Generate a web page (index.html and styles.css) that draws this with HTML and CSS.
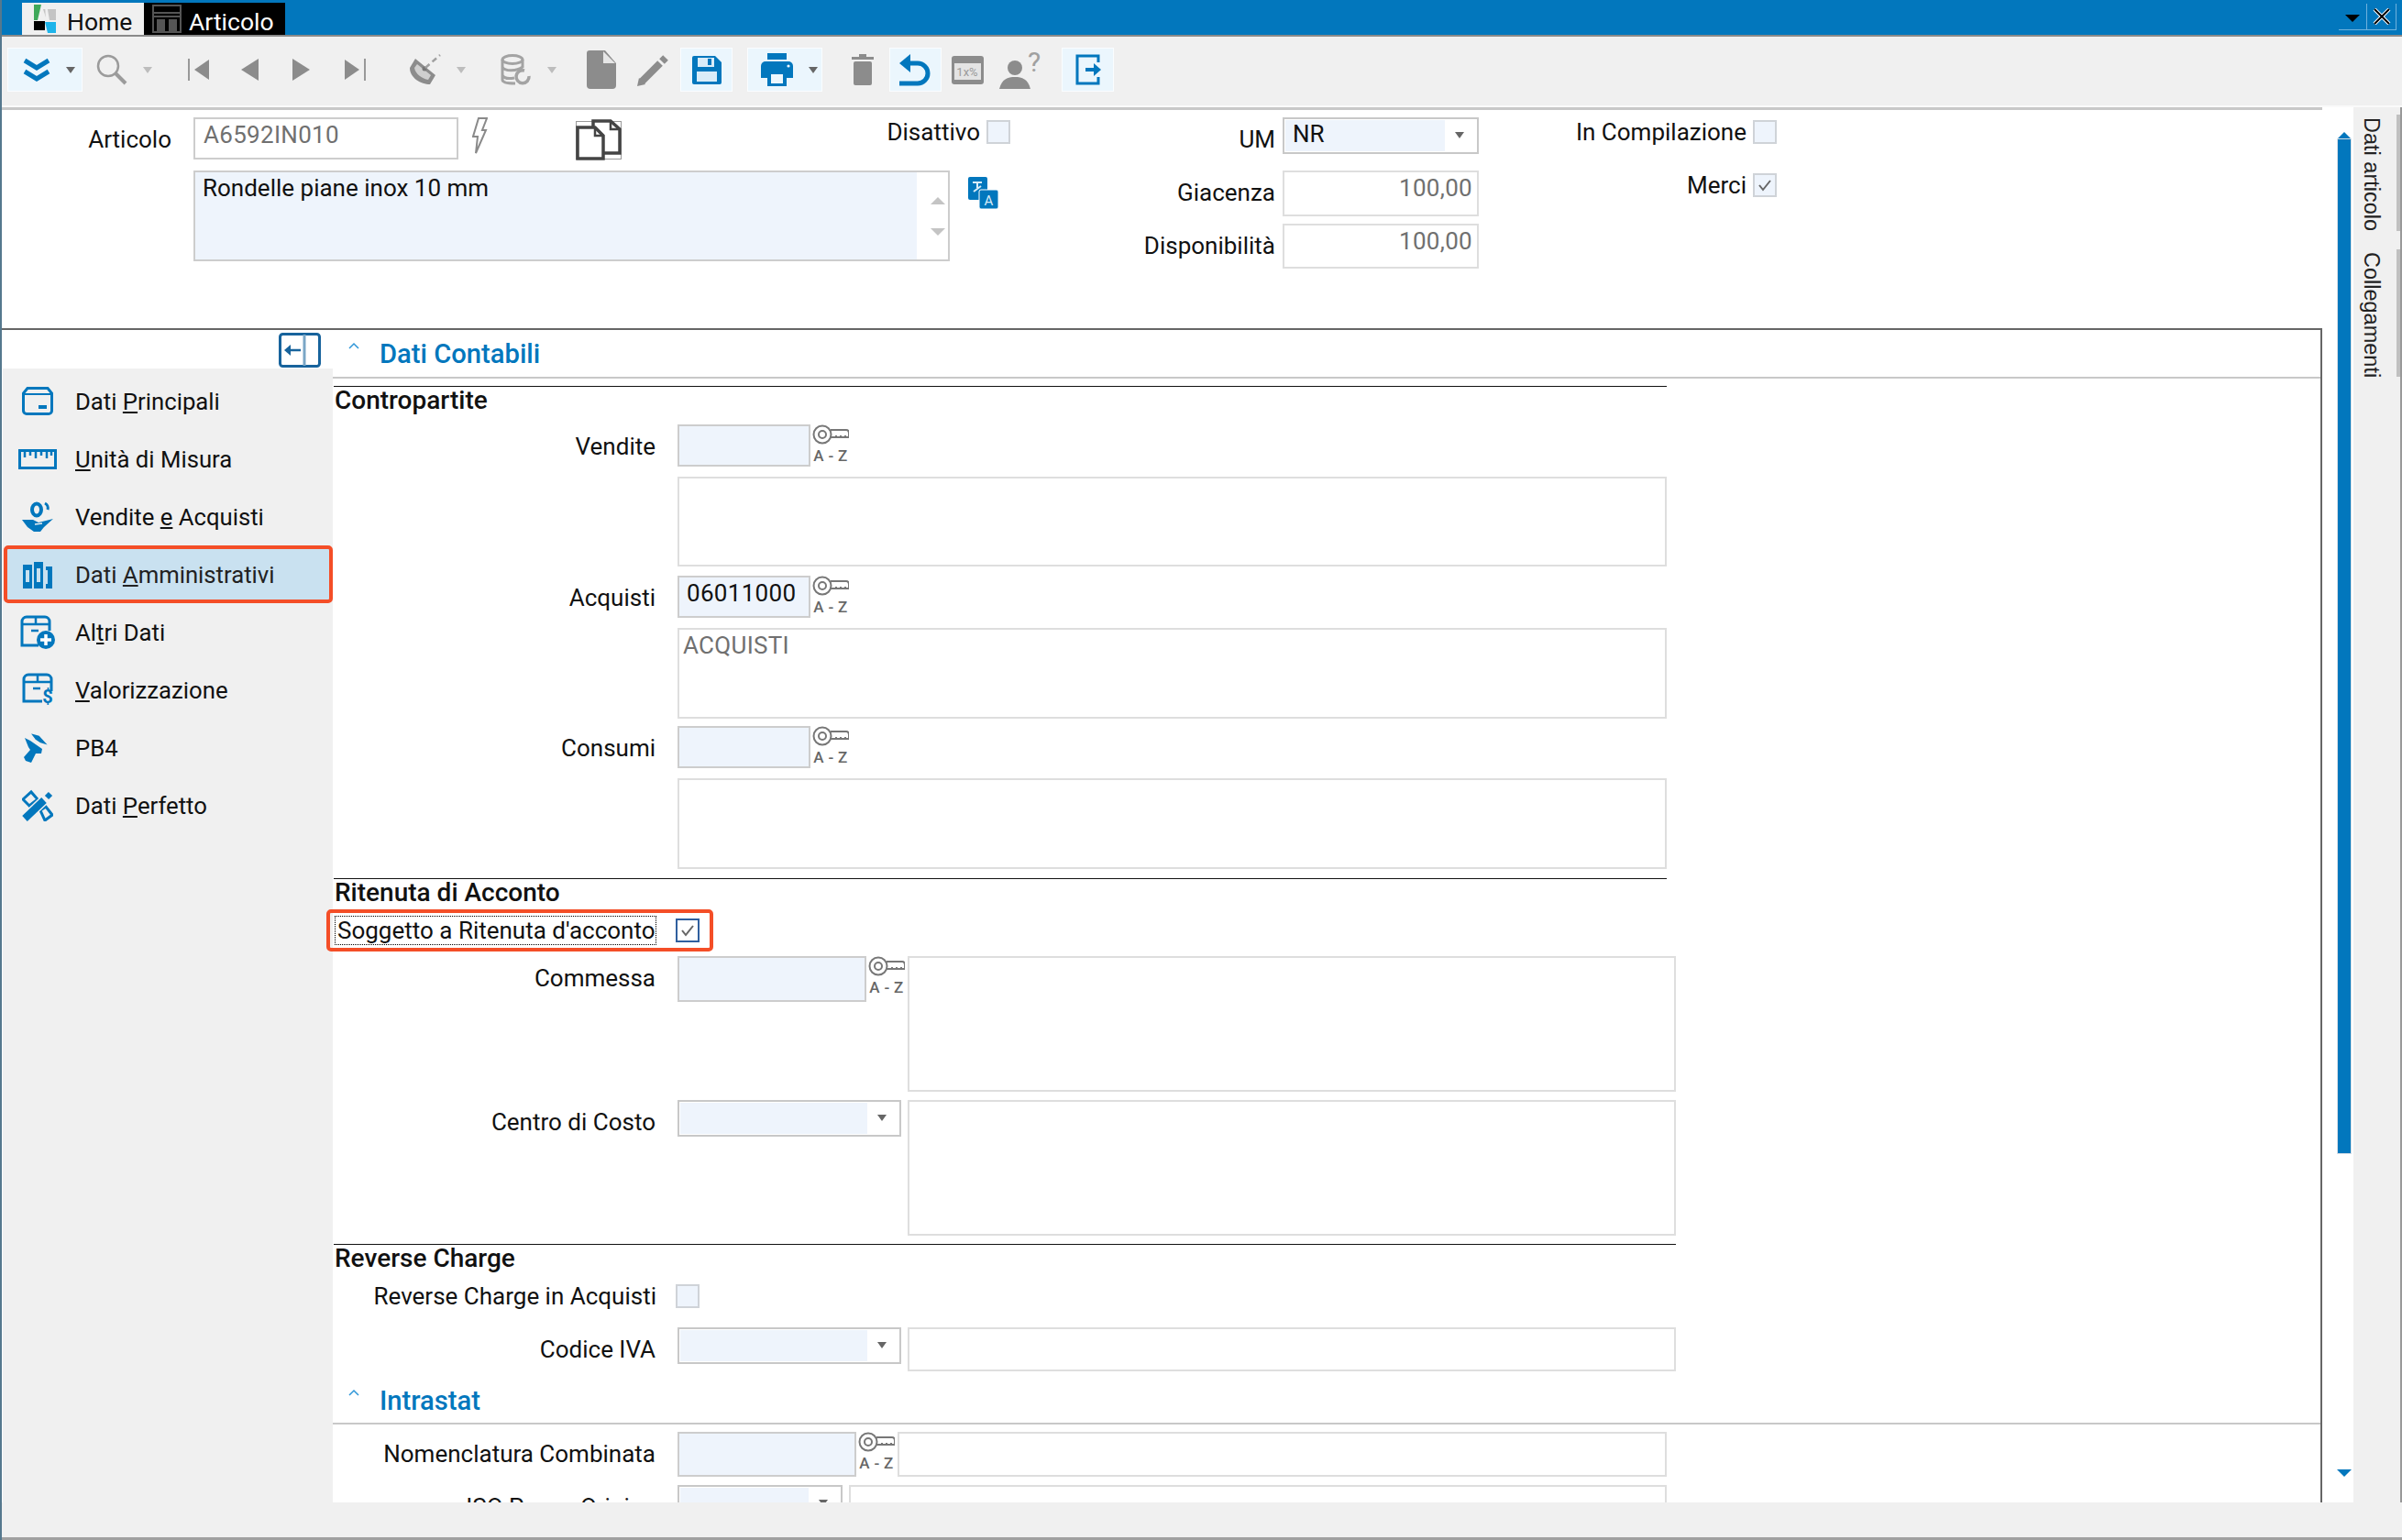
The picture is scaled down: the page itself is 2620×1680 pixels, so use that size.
FILE: index.html
```html
<!DOCTYPE html>
<html lang="it">
<head>
<meta charset="UTF-8">
<title>Articolo</title>
<link rel="stylesheet" href="styles.css">
</head>
<body>
<div class="app">
  <header class="titlebar">
    <div class="tab tab-home">
      <svg class="tab-logo" viewBox="0 0 24 31"><polygon points="0,0 8,0 4,17 0,17" fill="#3fa85a"/><polygon points="10,5 24,5 24,17 14,17" fill="#c4c4c4"/><rect x="0" y="18" width="12" height="10" fill="#000"/><polygon points="12,19 24,19 24,31 15,31" fill="#1eb4ea"/><polygon points="12,0 14,0 17,17 13,17" fill="#f0f0f0"/></svg>
      <span>Home</span>
    </div>
    <div class="tab tab-article">
      <svg class="tab-icon" viewBox="0 0 32 31"><rect x="1" y="1" width="30" height="29" fill="none" stroke="#555" stroke-width="2"/><path d="M2 9H30M2 13H30" stroke="#555" stroke-width="2"/><rect x="5" y="16" width="9" height="13" fill="#555"/><rect x="18" y="16" width="9" height="13" fill="#555"/></svg>
      <span>Articolo</span>
    </div>
    <div class="win-btns">
      <div class="win-btn win-menu"><span class="win-caret"></span></div>
      <div class="win-btn win-close">
        <svg viewBox="0 0 20 18" width="20" height="18"><path d="M2 1L18 17M18 1L2 17" stroke="#fff" stroke-width="4"/><path d="M2 1L18 17M18 1L2 17" stroke="#000" stroke-width="2"/></svg>
      </div>
    </div>
  </header>

  <div class="toolbar">
    <div class="tb-btn tb-menu"><svg width="30" height="27" viewBox="0 0 30 27"><path d="M2 3L15 11L28 3M2 15L15 23L28 15" fill="none" stroke="#0277bd" stroke-width="5"/></svg><span class="caret caret-dark"></span></div>
    <div class="tb-item"><svg width="34" height="34" viewBox="0 0 34 34"><circle cx="13" cy="13" r="11" fill="none" stroke="#9b9b9b" stroke-width="2.5"/><path d="M21 21L32 32" stroke="#9b9b9b" stroke-width="4"/></svg><span class="caret"></span></div>
    <div class="tb-item"><svg width="23" height="24" viewBox="0 0 23 24"><rect x="0" y="0" width="2" height="24" fill="#999"/><polygon points="7,12 23,1 23,23" fill="#8c8c8c"/></svg></div>
    <div class="tb-item"><svg width="19" height="24" viewBox="0 0 19 24"><polygon points="0,12 19,0 19,24" fill="#8c8c8c"/></svg></div>
    <div class="tb-item"><svg width="19" height="24" viewBox="0 0 19 24"><polygon points="19,12 0,0 0,24" fill="#8c8c8c"/></svg></div>
    <div class="tb-item"><svg width="23" height="24" viewBox="0 0 23 24"><rect x="21" y="0" width="2" height="24" fill="#999"/><polygon points="16,12 0,1 0,23" fill="#8c8c8c"/></svg></div>
    <div class="tb-item"><svg width="34" height="34" viewBox="0 0 34 34"><path d="M6 5L28 23L22 33C12 33 0 26 0 15Z" fill="#8c8c8c"/><path d="M8 11L23 23L20 28C14 27 6 22 5 15Z" fill="#cfcfcf"/><circle cx="16" cy="16" r="2.500" fill="#777"/><path d="M17 15L33 1" stroke="#a0a0a0" stroke-width="2.500" stroke-dasharray="6 4"/></svg><span class="caret"></span></div>
    <div class="tb-item"><svg width="34" height="34" viewBox="0 0 34 34"><g fill="none" stroke="#a3a3a3" stroke-width="3"><ellipse cx="13" cy="6" rx="11" ry="4.500"/><path d="M2 6V28C2 31 7 32 16 32M24 6V15M2 14C4 19 18 19 24 14M2 23C4 27 10 27 15 26"/><path d="M31 24A7 7 0 1 1 26 18" stroke-width="3.500"/></g></svg><span class="caret"></span></div>
    <div class="tb-item"><svg width="32" height="42" viewBox="0 0 32 42"><path d="M3 0H20L32 14V38A4 4 0 0 1 28 42H4A4 4 0 0 1 0 38V3A3 3 0 0 1 3 0Z" fill="#8c8c8c"/><polygon points="18,1 31,14 18,14" fill="#e6e6e6"/></svg></div>
    <div class="tb-item"><svg width="35" height="35" viewBox="0 0 35 35"><path d="M5 30L25 10" stroke="#8c8c8c" stroke-width="8"/><path d="M27 8L31 4" stroke="#8c8c8c" stroke-width="8"/><polygon points="0,35 2,26 9,33" fill="#8c8c8c"/></svg></div>
    <div class="tb-btn tb-save"><svg width="32" height="31" viewBox="0 0 32 31"><path d="M2 0H25L32 7V29A2 2 0 0 1 30 31H2A2 2 0 0 1 0 29V2A2 2 0 0 1 2 0Z" fill="#0277bd"/><rect x="6" y="2" width="18" height="10" fill="#d9ecf8"/><rect x="17" y="3" width="4" height="7" fill="#0277bd"/><rect x="5" y="17" width="22" height="11" fill="#d9ecf8"/></svg></div>
    <div class="tb-btn tb-print"><svg width="35" height="36" viewBox="0 0 35 36"><rect x="7" y="0" width="21" height="7" fill="#0277bd"/><path d="M5 9H30A5 5 0 0 1 35 14V27H0V14A5 5 0 0 1 5 9Z" fill="#0277bd"/><rect x="7" y="20" width="21" height="16" fill="#0277bd"/><rect x="11" y="23" width="13" height="10" fill="#edf7fd"/><circle cx="30" cy="14" r="1.6" fill="#edf7fd"/></svg><span class="caret caret-dark"></span></div>
    <div class="tb-item"><svg width="24" height="34" viewBox="0 0 24 34"><rect x="0" y="3" width="24" height="3" fill="#8c8c8c"/><rect x="8" y="0" width="8" height="3" fill="#8c8c8c"/><rect x="2" y="8" width="20" height="26" rx="2" fill="#8c8c8c"/></svg></div>
    <div class="tb-btn tb-undo"><svg width="35" height="35" viewBox="0 0 35 35"><polygon points="0,10 12,0 12,20" fill="#0277bd"/><path d="M10 10H20A11 11 0 0 1 20 32H0" fill="none" stroke="#0277bd" stroke-width="5"/></svg></div>
    <div class="tb-item"><svg width="35" height="31" viewBox="0 0 35 31"><rect width="35" height="31" rx="3" fill="#8c8c8c"/><rect x="3" y="8" width="29" height="18" fill="#e4e4e4"/><text x="17" y="22" font-family="Roboto" font-size="13" text-anchor="middle" fill="#9b9b9b">1x%</text></svg></div>
    <div class="tb-item"><svg width="34" height="42" viewBox="0 0 34 42"><circle cx="17" cy="19" r="8" fill="#8c8c8c"/><path d="M0 42C3 31 9 29 17 29S31 31 34 42Z" fill="#8c8c8c"/></svg><span class="help-mark">?</span></div>
    <div class="tb-btn tb-exit"><svg width="28" height="34" viewBox="0 0 28 34"><path d="M25 9V2H2V32H25V25" fill="none" stroke="#0277bd" stroke-width="3"/><path d="M11 17H24" stroke="#0277bd" stroke-width="4"/><polygon points="20,10 28,17 20,24" fill="#0277bd"/></svg></div>
  </div>

  <div class="workarea">
    <div class="workarea-left">
      <section class="head">
        <div class="head-col head-main">
          <div class="head-row">
            <label class="lbl lbl-articolo">Articolo</label>
            <div class="field w-code readonly">A6592IN010</div>
            <svg class="icon-bolt" width="17" height="40" viewBox="0 0 17 40"><path d="M7 1H16L11 14H15L4 39L6 21H1Z" fill="none" stroke="#8a8a8a" stroke-width="2"/></svg>
            <svg class="icon-copy" width="50" height="45" viewBox="0 0 50 45"><rect x=".5" y="2.500" width="49" height="41" fill="none" stroke="#333" stroke-dasharray="1 1"/><g fill="#fff" stroke="#444" stroke-width="3.500"><path d="M19 2H38L48 11V37H19Z"/><path d="M2 9H21L30 18V43H2Z"/><path d="M21 9V18H30M38 2V11H48" fill="none" stroke-width="2.500"/></g></svg>
            <label class="lbl-check w-disattivo">Disattivo</label>
            <span class="chk"></span>
          </div>
          <div class="head-row memo-row">
            <div class="memo">
              <div class="memo-fill">Rondelle piane inox 10 mm</div>
              <div class="memo-scroll"><span class="arrow-up"></span><span class="arrow-down"></span></div>
            </div>
            <svg class="icon-translate" width="33" height="35" viewBox="0 0 33 35"><rect x="0" y="0" width="21" height="25" rx="2" fill="#0277bd"/><rect x="12" y="14" width="21" height="21" rx="2" fill="#0277bd" stroke="#fff"/><path d="M5 6H15M10 6V12M6 16L14 10" stroke="#d9ecf8" stroke-width="2" fill="none"/><text x="22.500" y="31" font-family="Roboto" font-size="15" text-anchor="middle" fill="#d9ecf8">A</text></svg>
          </div>
        </div>
        <div class="head-col head-um">
          <div class="head-row">
            <label class="lbl w-um">UM</label>
            <div class="combo w-umf"><div class="combo-fill f-um">NR</div><span class="caret caret-dark"></span></div>
          </div>
          <div class="head-row um-giac">
            <label class="lbl w-um">Giacenza</label>
            <div class="field soft num w-umf h-giac">100,00</div>
          </div>
          <div class="head-row um-disp">
            <label class="lbl w-um">Disponibilità</label>
            <div class="field soft num w-umf h-disp">100,00</div>
          </div>
        </div>
        <div class="head-col head-flags">
          <div class="head-row">
            <label class="lbl-check w-flag">In Compilazione</label>
            <span class="chk"></span>
          </div>
          <div class="head-row flag-merci">
            <label class="lbl-check w-flag">Merci</label>
            <span class="chk"><svg width="16" height="14" viewBox="0 0 16 14"><path d="M2 7L6 12L14 2" fill="none" stroke="#666" stroke-width="2"/></svg></span>
          </div>
        </div>
      </section>

      <section class="panel">
        <nav class="side">
          <div class="side-top">
            <svg width="46" height="38" viewBox="0 0 46 38"><rect x="1.500" y="1.500" width="43" height="35" rx="3" fill="none" stroke="#17639c" stroke-width="3"/><path d="M28 2V36" stroke="#7aa6c6" stroke-width="3"/><path d="M8 19H24" stroke="#17639c" stroke-width="2.500"/><polygon points="6,19 13,13 13,25" fill="#17639c"/></svg>
          </div>
          <ul class="side-list">
            <li class="side-item">
              <span class="side-icon"><svg width="34" height="31" viewBox="0 0 34 31"><path d="M6 1.500H28L32.500 7V26A3.500 3.500 0 0 1 29 29.500H5A3.500 3.500 0 0 1 1.500 26V7Z" fill="none" stroke="#0277bd" stroke-width="3"/><path d="M2 8H32" stroke="#0277bd" stroke-width="2"/><rect x="18" y="20" width="9" height="4" fill="#0277bd"/></svg></span>
              <span>Dati <u>P</u>rincipali</span>
            </li>
            <li class="side-item">
              <span class="side-icon"><svg width="42" height="22" viewBox="0 0 42 22"><rect x="1.500" y="1.500" width="39" height="19" fill="none" stroke="#0277bd" stroke-width="3"/><path d="M7 2V9M13 2V7M19 2V10M25 2V7M31 2V10M36 2V7" stroke="#0277bd" stroke-width="2.500"/></svg></span>
              <span><u>U</u>nità di Misura</span>
            </li>
            <li class="side-item">
              <span class="side-icon"><svg width="34" height="34" viewBox="0 0 34 34"><ellipse cx="16" cy="9" rx="5" ry="6.500" fill="none" stroke="#0277bd" stroke-width="4"/><path d="M25 2A6 6 0 0 1 28 9" fill="none" stroke="#0277bd" stroke-width="3"/><path d="M0 20H12L18 23L34 19L24 28L20 33H13L6 28Z" fill="#0277bd"/><path d="M14 25L22 24" stroke="#f0f0f0" stroke-width="1.500"/></svg></span>
              <span>Vendite <u>e</u> Acquisti</span>
            </li>
            <li class="side-item selected">
              <span class="side-icon"><svg width="33" height="30" viewBox="0 0 33 30"><rect x="0" y="4" width="10" height="26" fill="#0277bd"/><rect x="3" y="10" width="4" height="13" fill="#c9e1f0"/><rect x="12" y="1" width="10" height="29" fill="#0277bd"/><rect x="15" y="8" width="4" height="15" fill="#c9e1f0"/><rect x="25" y="6" width="7" height="24" fill="#0277bd"/><rect x="25" y="10" width="2" height="15" fill="#c9e1f0"/></svg></span>
              <span>Dati <u>A</u>mministrativi</span>
            </li>
            <li class="side-item">
              <span class="side-icon"><svg width="38" height="37" viewBox="0 0 38 37"><path d="M20 33H2V7A5 5 0 0 1 7 2H27A5 5 0 0 1 32 7V17" fill="none" stroke="#0277bd" stroke-width="3"/><path d="M2 10H32M17 2V10M12 17H20" stroke="#0277bd" stroke-width="2.500"/><circle cx="28" cy="27" r="10" fill="#0277bd"/><path d="M22 27H34M28 21V33" stroke="#fff" stroke-width="3.500"/></svg></span>
              <span>Al<u>t</u>ri Dati</span>
            </li>
            <li class="side-item">
              <span class="side-icon"><svg width="35" height="38" viewBox="0 0 35 38"><path d="M22 31H2V7A5 5 0 0 1 7 2H27A5 5 0 0 1 32 7V20" fill="none" stroke="#0277bd" stroke-width="3"/><path d="M2 10H32M17 2V10M12 17H20" stroke="#0277bd" stroke-width="2.500"/><text x="28" y="33" font-family="Roboto" font-weight="700" font-size="20" text-anchor="middle" fill="#0277bd">$</text></svg></span>
              <span><u>V</u>alorizzazione</span>
            </li>
            <li class="side-item">
              <span class="side-icon"><svg width="30" height="35" viewBox="0 0 30 35"><polygon points="1,7 7,10 20,19 19,24 13,24 8,34 2,32 0,28 7,20 5,17" fill="#0277bd"/><polygon points="6,1 17,4 28,16 18,13 12,9" fill="#0277bd" stroke="#f0f0f0" stroke-width="1.500"/></svg></span>
              <span>PB4</span>
            </li>
            <li class="side-item">
              <span class="side-icon"><svg width="34" height="35" viewBox="0 0 34 35"><g fill="none" stroke="#0277bd" stroke-width="3"><polygon points="1,11 10,3 17,11 8,18"/><polygon points="20,23 26,19 33,28 25,34"/></g><path d="M3 32L24 12" stroke="#f0f0f0" stroke-width="11"/><path d="M3 32L24 12" stroke="#0277bd" stroke-width="8"/><path d="M27 9L31 5" stroke="#0277bd" stroke-width="6"/></svg></span>
              <span>Dati <u>P</u>erfetto</span>
            </li>
          </ul>
        </nav>

        <div class="content">
          <div class="section-head">
            <svg class="chev" width="12" height="8" viewBox="0 0 12 8"><path d="M1 7L6 2L11 7" fill="none" stroke="#2f96d8" stroke-width="1.500"/></svg>
            <h2 class="section-title">Dati Contabili</h2>
          </div>

          <h3 class="group-title g-first w-g1">Contropartite</h3>
          <div class="row r-vendite">
            <label class="lbl w-lbl">Vendite</label>
            <div class="field tint w-key h-46"></div>
            <div class="key"><svg width="40" height="22" viewBox="0 0 40 22"><g fill="none" stroke="#777" stroke-width="2"><circle cx="11" cy="11" r="9.500"/><circle cx="11" cy="11" r="4"/><path d="M20 6H37Q40 6 40 10V14H20M26 14V12M31 14V12M36 14V12"/></g></svg><span class="az">A - Z</span></div>
          </div>
          <div class="field soft desc w-desc h-98"></div>
          <div class="row r-acquisti">
            <label class="lbl w-lbl">Acquisti</label>
            <div class="field tint w-key h-46">06011000</div>
            <div class="key"><svg width="40" height="22" viewBox="0 0 40 22"><g fill="none" stroke="#777" stroke-width="2"><circle cx="11" cy="11" r="9.500"/><circle cx="11" cy="11" r="4"/><path d="M20 6H37Q40 6 40 10V14H20M26 14V12M31 14V12M36 14V12"/></g></svg><span class="az">A - Z</span></div>
          </div>
          <div class="field soft desc desc-grey w-desc h-99">ACQUISTI</div>
          <div class="row r-consumi">
            <label class="lbl w-lbl">Consumi</label>
            <div class="field tint w-key h-46"></div>
            <div class="key"><svg width="40" height="22" viewBox="0 0 40 22"><g fill="none" stroke="#777" stroke-width="2"><circle cx="11" cy="11" r="9.500"/><circle cx="11" cy="11" r="4"/><path d="M20 6H37Q40 6 40 10V14H20M26 14V12M31 14V12M36 14V12"/></g></svg><span class="az">A - Z</span></div>
          </div>
          <div class="field soft desc w-desc h-99"></div>

          <h3 class="group-title g-rit w-g1">Ritenuta di Acconto</h3>
          <div class="focus-row">
            <label class="focus-label">Soggetto a Ritenuta d'acconto</label>
            <span class="chk chk-focus"><svg width="16" height="14" viewBox="0 0 16 14"><path d="M2 7L6 12L14 2" fill="none" stroke="#666" stroke-width="2"/></svg></span>
          </div>
          <div class="row r-commessa">
            <label class="lbl w-lbl">Commessa</label>
            <div class="field tint w-comm h-50"></div>
            <div class="key key-wide"><svg width="40" height="22" viewBox="0 0 40 22"><g fill="none" stroke="#777" stroke-width="2"><circle cx="11" cy="11" r="9.500"/><circle cx="11" cy="11" r="4"/><path d="M20 6H37Q40 6 40 10V14H20M26 14V12M31 14V12M36 14V12"/></g></svg><span class="az">A - Z</span></div>
            <div class="field soft w-side h-148"></div>
          </div>
          <div class="row r-centro">
            <label class="lbl w-lbl">Centro di Costo</label>
            <div class="combo w-centro"><div class="combo-fill f-centro"></div><span class="caret caret-dark"></span></div>
            <div class="field soft w-side h-148 side-box"></div>
          </div>

          <h3 class="group-title g-rev w-g2">Reverse Charge</h3>
          <div class="row r-rev">
            <label class="lbl-check w-revlbl">Reverse Charge in Acquisti</label>
            <span class="chk"></span>
          </div>
          <div class="row r-iva">
            <label class="lbl w-lbl">Codice IVA</label>
            <div class="combo w-centro"><div class="combo-fill f-centro"></div><span class="caret caret-dark"></span></div>
            <div class="field soft w-side h-48 side-box"></div>
          </div>

          <div class="section-head sh-intra">
            <svg class="chev" width="12" height="8" viewBox="0 0 12 8"><path d="M1 7L6 2L11 7" fill="none" stroke="#2f96d8" stroke-width="1.500"/></svg>
            <h2 class="section-title">Intrastat</h2>
          </div>
          <div class="row r-nomen">
            <label class="lbl w-lbl">Nomenclatura Combinata</label>
            <div class="field tint w-nomen h-49"></div>
            <div class="key key-nomen"><svg width="40" height="22" viewBox="0 0 40 22"><g fill="none" stroke="#777" stroke-width="2"><circle cx="11" cy="11" r="9.500"/><circle cx="11" cy="11" r="4"/><path d="M20 6H37Q40 6 40 10V14H20M26 14V12M31 14V12M36 14V12"/></g></svg><span class="az">A - Z</span></div>
            <div class="field soft w-nomend h-49"></div>
          </div>
          <div class="row r-iso">
            <label class="lbl w-lbl">ISO Paese Origine</label>
            <div class="combo w-iso"><div class="combo-fill f-iso"></div><span class="caret caret-dark"></span></div>
            <div class="field soft w-isod h-49 iso-box"></div>
          </div>
        </div>
      </section>
    </div>

    <div class="scroll-strip">
      <span class="sb-up"></span>
      <div class="sb-thumb"></div>
      <span class="sb-down"></span>
    </div>

    <aside class="rail">
      <div class="rail-tab rt-dati">Dati articolo</div>
      <div class="rail-tab rt-coll">Collegamenti</div>
    </aside>
  </div>

  <footer class="statusbar"></footer>
</div>
</body>
</html>
```

FILE: styles.css
```css
* {
  box-sizing: border-box;
}
html, body {
  margin: 0;
  padding: 0;
  width: 2620px;
  height: 1680px;
  overflow: hidden;
  background: #f0f0f0;
  font-family: Roboto, sans-serif;
  font-size: 26px;
  color: #111;
}
.app {
  width: 2620px;
  height: 1680px;
  display: flex;
  flex-direction: column;
  border-left: 2px solid #55788e;
}

/* TITLE BAR */
.titlebar {
  height: 40px;
  flex: none;
  display: flex;
  align-items: flex-end;
  background: #0277bd;
  border-bottom: 2px solid #8a8a8a;
  padding-left: 22px;
}
.tab {
  height: 35px;
  display: flex;
  align-items: center;
  line-height: 35px;
  font-size: 26.5px;
}
.tab span {
  margin-top: 5px;
}
.tab-home {
  width: 133px;
  background: #f0f0f0;
  padding-left: 13px;
  color: #111;
}
.tab-logo {
  width: 24px;
  height: 31px;
  margin-right: 12px;
}
.tab-article {
  width: 154px;
  background: #000;
  padding-left: 9px;
  color: #fff;
}
.tab-icon {
  width: 32px;
  height: 31px;
  margin-right: 8px;
}
.win-btns {
  margin-left: auto;
  margin-right: 6px;
  align-self: flex-start;
  margin-top: 4px;
  display: flex;
}
.win-btn {
  height: 29px;
  border-bottom: 1px solid #6fb2dd;
  border-right: 1px solid #6fb2dd;
  display: flex;
  align-items: center;
  justify-content: center;
}
.win-menu {
  width: 31px;
}
.win-close {
  width: 32px;
}
.win-caret {
  width: 0;
  height: 0;
  margin-top: 4px;
  border-left: 8px solid transparent;
  border-right: 8px solid transparent;
  border-top: 8px solid #000;
}

/* TOOLBAR */
.toolbar {
  height: 77px;
  flex: none;
  display: grid;
  grid-template-columns: 97px 100px 58px 56px 57px 71px 99px 94px 55px 47px 73px 114px 41px 68px 52px 68px 57px;
  grid-template-rows: 48px;
  align-items: center;
  padding: 12px 0 15px 6px;
  background: #f0f0f0;
  border-bottom: 2px solid #fafafa;
}
.tb-item {
  display: flex;
  align-items: center;
}
.tb-btn {
  height: 48px;
  display: flex;
  align-items: center;
  background: #ebf6fd;
  border: 1px solid #fafdff;
}
.tb-menu {
  width: 82px;
  padding-left: 16px;
}
.tb-save, .tb-undo, .tb-exit {
  width: 57px;
  justify-content: center;
}
.tb-exit {
  padding-left: 0;
}
.tb-print {
  width: 82px;
  padding-left: 14px;
}
.caret {
  width: 0;
  height: 0;
  margin-left: 17px;
  border-left: 5px solid transparent;
  border-right: 5px solid transparent;
  border-top: 7px solid #bdbdbd;
}
.caret-dark {
  border-top-color: #666;
}
.help-mark {
  height: 30px;
  margin: 0 0 16px -3px;
  font-size: 30px;
  line-height: 30px;
  color: #a0a0a0;
}

/* WORK AREA */
.workarea {
  flex: 1;
  min-height: 0;
  display: flex;
  background: #fff;
}
.workarea-left {
  width: 2531px;
  flex: none;
  display: flex;
  flex-direction: column;
  border-top: 3px solid #c8c8c8;
}

/* HEADER FORM */
.head {
  height: 238px;
  flex: none;
  display: flex;
  padding-top: 8px;
  background: #fff;
}
.head-col {
  display: flex;
  flex-direction: column;
}
.head-main {
  width: 1100px;
}
.head-um {
  width: 511px;
}
.head-row {
  display: flex;
  align-items: flex-start;
}
.lbl {
  display: block;
  flex: none;
  height: 40px;
  line-height: 49px;
  text-align: right;
}
.lbl-articolo {
  width: 185px;
  margin-right: 24px;
}
.field {
  flex: none;
  border: 2px solid #cdcdcd;
  padding: 2px 8px 0;
  line-height: 30px;
  background: #fff;
  letter-spacing: .3px;
}
.readonly {
  color: #707070;
  padding-left: 9px;
  height: 46px;
}
.soft {
  border-color: #dedede;
}
.tint {
  background: #eef4fc;
}
.num {
  text-align: right;
  color: #707070;
  padding-right: 5px;
}
.w-code {
  width: 289px;
}
.icon-bolt {
  margin-left: 15px;
  flex: none;
}
.icon-copy {
  margin-left: 96px;
  margin-top: 2px;
  flex: none;
}
.lbl-check {
  flex: none;
  display: block;
  line-height: 26px;
  text-align: right;
}
.w-disattivo {
  width: 391px;
  margin-top: 3px;
  margin-right: 7px;
}
.chk {
  flex: none;
  width: 26px;
  height: 26px;
  margin-top: 3px;
  display: flex;
  align-items: center;
  justify-content: center;
  background: #eef4fc;
  border: 2px solid #cfd3d8;
}
.memo-row {
  margin-top: 11px;
  padding-left: 209px;
}
.memo {
  width: 825px;
  height: 99px;
  flex: none;
  display: flex;
  border: 2px solid #cdcdcd;
}
.memo-fill {
  width: 787px;
  background: #eef4fc;
  padding: 2px 8px 0;
  line-height: 30px;
}
.memo-scroll {
  flex: 1;
  display: flex;
  flex-direction: column;
  align-items: center;
  justify-content: center;
  gap: 26px;
  padding-left: 12px;
}
.arrow-up, .sb-up {
  width: 0;
  height: 0;
  border-left: 8px solid transparent;
  border-right: 8px solid transparent;
  border-bottom: 8px solid #c4c4c4;
}
.arrow-down, .sb-down {
  width: 0;
  height: 0;
  border-left: 8px solid transparent;
  border-right: 8px solid transparent;
  border-top: 8px solid #c4c4c4;
}
.icon-translate {
  margin-left: 20px;
  margin-top: 7px;
  flex: none;
}
.w-um {
  width: 289px;
  margin-right: 8px;
}
.w-umf {
  width: 214px;
}
.combo {
  flex: none;
  height: 40px;
  display: flex;
  align-items: center;
  border: 2px solid #c8c8c8;
  padding: 1px;
  background: #fff;
}
.combo-fill {
  height: 100%;
  background: #eef4fc;
  padding-left: 8px;
  line-height: 30px;
  padding-top: 0;
}
.combo .caret {
  margin-left: 11px;
  margin-top: -2px;
}
.f-um {
  width: 174px;
}
.um-giac {
  margin-top: 18px;
}
.um-disp {
  margin-top: 8px;
}
.h-giac {
  height: 50px;
}
.h-disp {
  height: 49px;
}
.w-flag {
  width: 292px;
  margin-top: 3px;
  margin-right: 7px;
}
.flag-merci {
  margin-top: 29px;
}

/* MAIN PANEL */
.panel {
  flex: 1;
  min-height: 0;
  display: flex;
  overflow: hidden;
  border-top: 2px solid #666;
  border-right: 2px solid #666;
  background: #fff;
}
.side {
  width: 361px;
  flex: none;
  display: flex;
  flex-direction: column;
}
.side-top {
  height: 42px;
  flex: none;
  padding: 3px 13px 0 0;
  display: flex;
  justify-content: flex-end;
}
.side-list {
  flex: 1;
  list-style: none;
  margin: 0 0 0 1px;
  padding: 4px 0 0;
  background: #f0f0f0;
}
.side-item {
  height: 63px;
  display: flex;
  align-items: center;
  padding-left: 14px;
  border: 3px solid transparent;
  border-right: 0;
  font-size: 25.7px;
}
.side-item.selected {
  background: #c9e1f0;
  margin-left: 1px;
  padding-left: 12px;
  border: 4px solid #f44e27;
  border-radius: 5px;
  color: #222;
}
.side-icon {
  width: 42px;
  flex: none;
  margin-right: 20px;
  display: flex;
  align-items: center;
  justify-content: center;
}

/* CONTENT */
.content {
  flex: 1;
  min-width: 0;
  display: flex;
  flex-direction: column;
}
.section-head {
  height: 53px;
  flex: none;
  display: flex;
  align-items: flex-start;
  border-bottom: 2px solid #c8c8c8;
}
.chev {
  margin: 13px 22px 0 17px;
  flex: none;
}
.section-title {
  margin: 0;
  font-size: 29.2px;
  font-weight: 500;
  color: #0277bd;
  line-height: 52px;
}
.sh-intra {
  margin-top: 6px;
  height: 52px;
}
.group-title {
  margin: 0 0 0 1px;
  flex: none;
  height: 31px;
  padding-left: 1px;
  border-top: 1px solid #111;
  font-size: 28px;
  font-weight: 500;
  line-height: 30px;
}
.w-g1 {
  width: 1454px;
}
.w-g2 {
  width: 1464px;
}
.g-first {
  margin-top: 8px;
}
.g-rit {
  margin-top: 10px;
}
.g-rev {
  margin-top: 9px;
}
.row {
  flex: none;
  display: flex;
  align-items: flex-start;
}
.w-lbl {
  width: 352px;
  margin-right: 24px;
}
.w-key {
  width: 145px;
}
.h-46 {
  height: 46px;
}
.h-48 {
  height: 48px;
}
.h-49 {
  height: 49px;
}
.h-50 {
  height: 50px;
}
.h-98 {
  height: 98px;
}
.h-99 {
  height: 99px;
}
.h-148 {
  height: 148px;
}
.key {
  flex: none;
  width: 40px;
  height: 46px;
  margin-left: 2px;
  display: flex;
  flex-direction: column;
}
.key-wide {
  width: 43px;
  margin-left: 2px;
}
.key-nomen {
  width: 43px;
  margin-left: 2px;
}
.az {
  display: block;
  width: 40px;
  margin-top: 2px;
  font-size: 17px;
  font-weight: 500;
  line-height: 20px;
  color: #666;
  text-align: center;
  letter-spacing: .3px;
  white-space: nowrap;
}
.r-vendite {
  margin-top: 11px;
}
.desc {
  margin-left: 376px;
  margin-top: 11px;
}
.desc-grey {
  color: #707070;
  padding-left: 4px;
}
.w-desc {
  width: 1079px;
}
.r-acquisti {
  margin-top: 10px;
}
.r-consumi {
  margin-top: 8px;
}
.focus-row {
  flex: none;
  width: 422px;
  height: 46px;
  margin: 3px 0 0 -7px;
  padding-left: 5px;
  display: flex;
  align-items: center;
  border: 4px solid #f44e27;
  border-radius: 5px;
}
.focus-label {
  flex: none;
  width: 351px;
  height: 32px;
  line-height: 30px;
  padding-left: 2px;
  border: 1px dotted #000;
  white-space: nowrap;
}
.chk-focus {
  margin: 0 0 0 21px;
  background: #fff;
  border-color: #2f5f9e;
}
.r-commessa {
  margin-top: 5px;
}
.w-comm {
  width: 206px;
}
.w-side {
  width: 838px;
}
.r-centro {
  margin-top: 9px;
}
.w-centro {
  width: 244px;
}
.side-box {
  margin-left: 7px;
}
.f-centro {
  width: 204px;
}
.r-rev {
  margin-top: 13px;
}
.w-revlbl {
  width: 353px;
  margin-right: 21px;
}
.r-rev .chk {
  margin-top: 0;
}
.r-iva {
  margin-top: 21px;
}
.r-nomen {
  margin-top: 8px;
}
.w-nomen {
  width: 195px;
}
.w-nomend {
  width: 839px;
}
.r-iso {
  margin-top: 9px;
}
.w-iso {
  width: 180px;
}
.f-iso {
  width: 140px;
}
.w-isod {
  width: 892px;
}
.iso-box {
  margin-left: 7px;
}

/* SCROLLBAR */
.scroll-strip {
  width: 34px;
  flex: none;
  display: flex;
  flex-direction: column;
  padding: 27px 3px 0 17px;
  background: #fff;
}
.sb-up {
  flex: none;
  align-self: center;
  border-bottom-color: #0277bd;
}
.sb-thumb {
  width: 14px;
  height: 1106px;
  flex: none;
  background: #0277bd;
  box-shadow: 0 0 0 1px #d6dfe6;
}
.sb-down {
  flex: none;
  align-self: center;
  margin-top: 345px;
  border-top-color: #0277bd;
}

/* RIGHT RAIL */
.rail {
  flex: 1;
  display: flex;
  flex-direction: column;
  background: #f0f0f0;
  border-right: 2px solid #999;
  font-family: "Liberation Sans", sans-serif;
  font-size: 23.5px;
  color: #222;
}
.rail-tab {
  writing-mode: vertical-rl;
  width: 51px;
  padding-right: 15px;
  border-right: 4px solid #c0c0c0;
  line-height: 24px;
  white-space: nowrap;
}
.rt-dati {
  margin-top: 8px;
  height: 127px;
  padding-top: 3px;
}
.rt-coll {
  margin-top: 20px;
  height: 139px;
  padding-top: 3px;
}

/* BOTTOM BAND */
.statusbar {
  height: 41px;
  flex: none;
  background: #f0f0f0;
  border-bottom: 3px solid #a0a0a0;
}
```
